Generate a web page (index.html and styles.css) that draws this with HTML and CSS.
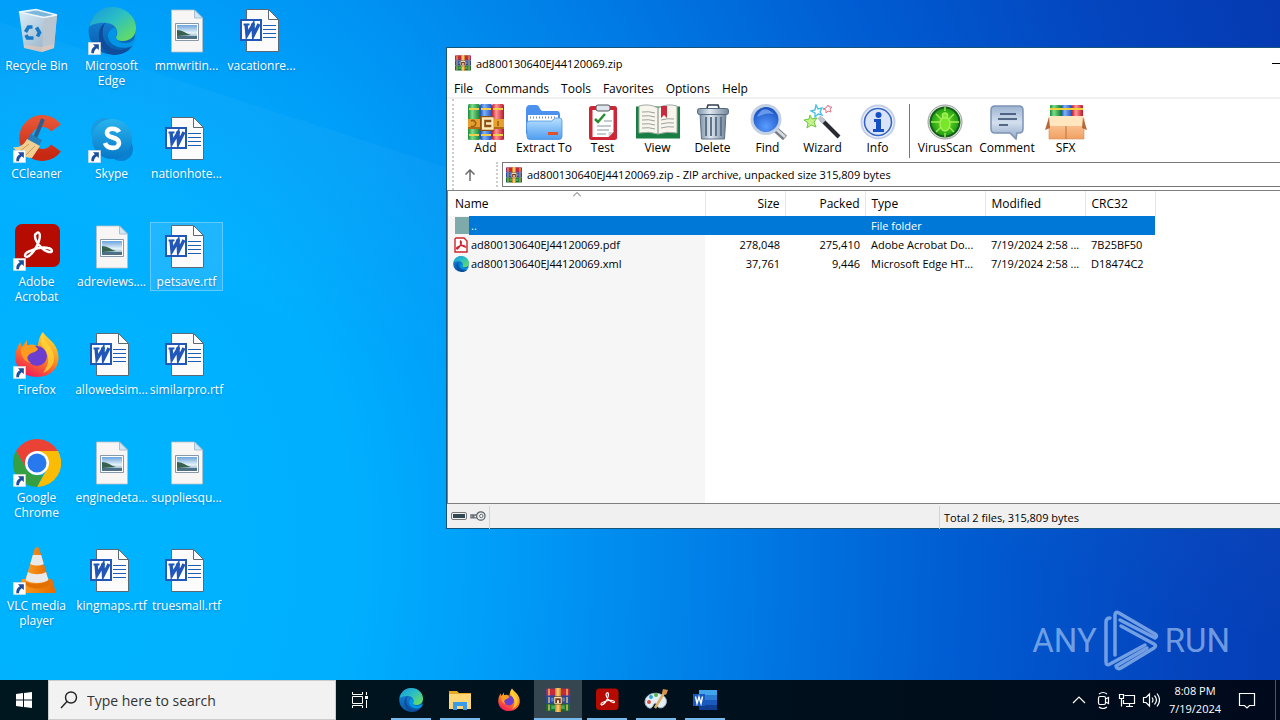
FILE: index.html
```html
<!DOCTYPE html>
<html lang="en">
<head>
<meta charset="utf-8">
<title>Desktop</title>
<link rel="stylesheet" href="styles.css">
</head>
<body>
<svg class="sprite" aria-hidden="true">
  <defs>
    <linearGradient id="edgeTop" x1="0" y1="0" x2="1" y2="1"><stop offset="0" stop-color="#1596dc"/><stop offset=".45" stop-color="#2bbfc5"/><stop offset="1" stop-color="#71e34d"/></linearGradient>
    <linearGradient id="edgeLeft" x1="0" y1="0" x2="0" y2="1"><stop offset="0" stop-color="#198be0"/><stop offset="1" stop-color="#0759a8"/></linearGradient>
    <linearGradient id="bin" x1="0" y1="0" x2="1" y2="1"><stop offset="0" stop-color="#f3f7fb"/><stop offset="1" stop-color="#9aa7b5"/></linearGradient>
    <linearGradient id="sky" x1="0" y1="0" x2="0" y2="1"><stop offset="0" stop-color="#6aa4dc"/><stop offset=".55" stop-color="#e5f1f8"/><stop offset="1" stop-color="#6e9bb5"/></linearGradient>
    <linearGradient id="skype" x1="0" y1="0" x2="0" y2="1"><stop offset="0" stop-color="#28b4ee"/><stop offset="1" stop-color="#0678c8"/></linearGradient>
    <linearGradient id="cc" x1="0" y1="0" x2="0" y2="1"><stop offset="0" stop-color="#e65434"/><stop offset="1" stop-color="#c62812"/></linearGradient>
    <linearGradient id="fox" x1=".8" y1="0" x2=".3" y2="1"><stop offset="0" stop-color="#ffe33a"/><stop offset=".5" stop-color="#ff8a1e"/><stop offset="1" stop-color="#f0185c"/></linearGradient>
    <linearGradient id="cone" x1="0" y1="0" x2="1" y2="0"><stop offset="0" stop-color="#ff9d22"/><stop offset="1" stop-color="#e56a00"/></linearGradient>
    <linearGradient id="blueFolder" x1="0" y1="0" x2="0" y2="1"><stop offset="0" stop-color="#b9e1ff"/><stop offset="1" stop-color="#4f9df0"/></linearGradient>
    <linearGradient id="steel" x1="0" y1="0" x2="1" y2="0"><stop offset="0" stop-color="#7f92a6"/><stop offset=".4" stop-color="#dfe8f0"/><stop offset="1" stop-color="#72869a"/></linearGradient>
    <linearGradient id="bubble" x1="0" y1="0" x2="0" y2="1"><stop offset="0" stop-color="#9db3d1"/><stop offset=".5" stop-color="#d3dfee"/><stop offset="1" stop-color="#92a8c9"/></linearGradient>
    <linearGradient id="box" x1="0" y1="0" x2="0" y2="1"><stop offset="0" stop-color="#ffd0a2"/><stop offset="1" stop-color="#f0a064"/></linearGradient>
    <linearGradient id="bookG" x1="0" y1="0" x2="1" y2="0"><stop offset="0" stop-color="#178a3a"/><stop offset=".35" stop-color="#7fdc8a"/><stop offset="1" stop-color="#13802f"/></linearGradient>
    <linearGradient id="bookB" x1="0" y1="0" x2="1" y2="0"><stop offset="0" stop-color="#1648b4"/><stop offset=".35" stop-color="#7fb2f6"/><stop offset="1" stop-color="#1a4fc0"/></linearGradient>
    <linearGradient id="bookR" x1="0" y1="0" x2="1" y2="0"><stop offset="0" stop-color="#c41a2c"/><stop offset=".35" stop-color="#ff9a98"/><stop offset="1" stop-color="#bd1427"/></linearGradient>
    <radialGradient id="lens" cx=".5" cy=".75" r=".7"><stop offset="0" stop-color="#5a9cff"/><stop offset="1" stop-color="#164fc0"/></radialGradient>
    <radialGradient id="virus"><stop offset="0" stop-color="#7ee81e"/><stop offset="1" stop-color="#199a14"/></radialGradient>
  </defs>
  <symbol id="i-link" viewBox="0 0 12 12"><path fill="#fff" stroke="#c8d0d8" stroke-width=".5" d="M.3.3h11.4v11.4H.3z"/><path fill="#1c4e9e" d="M4.600 2H10v5.400L8.200 5.700C6.300 7 5.600 8.300 5.500 10.400H3.100C2.700 7.500 4 5.200 6.300 3.900z"/></symbol>
  <symbol id="i-bin" viewBox="0 0 48 48"><path fill="url(#bin)" d="M6 5l5 36 17 4 13-4 3-33-21-5z" opacity=".9"/><path fill="#b9c6d2" d="M31 10l13-2-3 33-12 4z"/><path fill="#68afd8" opacity=".8" d="M8 6l16-2.500L42 8l-11 2z"/><path fill="none" stroke="#eef6fc" stroke-width="1.500" d="M6 5l17-2.500L44 8l-13 2.500z"/><path fill="#ecc9b4" opacity=".6" d="M11 38l18 2 12-3v4l-12 4-17-4z"/><g fill="none" stroke="#1579c8" stroke-width="3.600"><path d="M12.500 25l3-5h4"/><path d="M23.500 20.500l3 5-2 4"/><path d="M20.500 31h-6l-1.500-3"/></g></symbol>
  <symbol id="i-edge" viewBox="0 0 48 48"><circle cx="24" cy="24" r="23.500" fill="url(#edgeLeft)"/><path fill="url(#edgeTop)" d="M1 20C4 7 13 0 24 0c14 0 24 10 24 21 0 8-6 13-13 13-5 0-8-2-7-4 3-4 1-13-9-14C10 15 3 18 1 20z"/><path fill="#0f4d9c" d="M18 15c-5 5-6 25 11 28 8 1 14-4 16-5-5 8-13 10-20 10C11 45 5 23 18 15z"/><path fill="#0099eb" d="M28 29c0 4 4 7 9 7 4 0 8-2 11-5-1 4-2 6-4 8-12 5-25-1-24-12 1-3 4-6 7-6 2 2 2 6 1 8z" opacity=".9"/></symbol>
  <symbol id="i-pic" viewBox="0 0 48 48"><path fill="#f7f6f4" stroke="#b8c0c6" stroke-width=".8" d="M8.500 3h23l8 8v34h-31z"/><path fill="#cfe6f6" stroke="#9db4c4" stroke-width=".8" d="M31.500 3v8h8z"/><path fill="#fff" stroke="#8798a8" d="M12.500 16.500h23v17h-23z"/><path fill="url(#sky)" d="M14 18h20v14H14z"/><path fill="#36624f" d="M14 23c5 0 8 3 14 5l-14 1z"/><path fill="#4c7187" d="M14 29h20v3H14z"/></symbol>
  <symbol id="i-doc" viewBox="0 0 48 48"><path fill="#fbfbfb" stroke="#5c6974" d="M8.500 2.500h22l10 10v32h-32z"/><path fill="#fff" stroke="#5c6974" d="M30.500 2.500v10h10z"/><path stroke="#215cb4" d="M25 19.500h13M25 23.500h13M25 27.500h13M25 31.500h13" transform="translate(0 -1)"/><path fill="#fff" stroke="#2158b8" stroke-width="2" d="M3 13h20v20H3z"/><path fill="none" stroke="#2158b8" stroke-width="3.400" d="M8 17l1 11 6-10 .5 10L21 17"/><path stroke="#2158b8" stroke-width="1.800" d="M5.500 17.500h6M13 17.500h4"/></symbol>
  <symbol id="i-cc" viewBox="0 0 48 48"><path fill="none" stroke="url(#cc)" stroke-width="12" d="M43 13A17 17 0 1 0 43 33"/><path stroke="#315d8c" stroke-width="4" d="M30 4L22 23"/><path fill="#247fbd" d="M17 19l12 6-4 8-11-6z"/><path fill="#f1cf91" d="M14 24l13 7-8 12C12 43 5 39 0 32c6 1 11-2 14-8z"/><path fill="none" stroke="#c89c5f" d="M16 29l-9 7M22 31l-9 9"/></symbol>
  <symbol id="i-skype" viewBox="0 0 48 48"><circle cx="16" cy="16" r="13" fill="#189be0"/><circle cx="33" cy="34" r="12" fill="#0b7fd0"/><circle cx="24" cy="24" r="20" fill="url(#skype)"/><path fill="none" stroke="#fff" stroke-width="4.600" d="M31 17c-2-4-12-5-12 1 0 6 12 3 12 10 0 7-12 6-14 0"/></symbol>
  <symbol id="i-acro" viewBox="0 0 48 48"><rect x="2" y="1" width="45" height="43" rx="7" fill="#b50b00"/><path fill="none" stroke="#fff" stroke-width="2.400" stroke-linejoin="round" d="M23 11c3-4 5 0 3 7-2 6-7 14-12 16-3 0-3-4 3-6 7-3 14-4 18-3 5 1 5 5 1 4C30 28 22 19 22 13c0-1 0-2 1-2z"/></symbol>
  <symbol id="i-fox" viewBox="0 0 48 48"><path fill="url(#fox)" d="M30 1c2 4 8 8 11 12 10 14 3 33-17 33C6 46-1 31 4 17l3-6 2 5 5-7v6c5-3 8-1 11 1 0-6 2-12 5-15z"/><circle cx="24" cy="25" r="10" fill="#6c3ed0"/><path fill="#ff9b1f" d="M8 17c6-5 14-3 17 1-2 4-8 3-10 7-2 2 0 5 3 7-6-1-11-7-10-15z"/><path fill="#ffd83a" opacity=".75" d="M30 3c1 9 11 13 11 24 0 8-6 13-11 15 7-10 7-17 0-26-3-4-3-9 0-13z"/></symbol>
  <symbol id="i-chrome" viewBox="0 0 48 48"><path fill="#ea4335" d="M24 0a24 24 0 0 1 21 12H24L13.500 30 3 12A24 24 0 0 1 24 0z"/><path fill="#fbbc05" d="M45 12A24 24 0 0 1 24 48l10-18c3-6 0-14-10-18z"/><path fill="#34a043" d="M3 12l11 19c4 5 10 6 16 5l-6 12A24 24 0 0 1 3 12z"/><circle cx="24" cy="24" r="12" fill="#fff"/><circle cx="24" cy="24" r="9.500" fill="#2879ee"/></symbol>
  <symbol id="i-vlc" viewBox="0 0 48 48"><path fill="url(#cone)" d="M9 32h30l4 14H5z"/><path fill="#e17000" d="M12 37l2-9h20l3 9c-5 6-20 6-25 0z"/><path fill="url(#cone)" d="M22 1q2-1.500 4 0l10 33c-5 4-19 4-24 0z"/><path fill="#e9e9e9" d="M19.800 8h8.400l2.600 9c-4 2-9.600 2-13.600 0zM15 25c5 3 13 3 18 0l2.500 8c-5 4-18 4-23 0z"/></symbol>
  <symbol id="i-rar" viewBox="0 0 32 32"><rect y="1" width="32" height="10" rx="1" fill="#6a3596"/><path fill="#c9283a" d="M1 1h11v8H1zM20 1h11v8H20z"/><rect y="11" width="32" height="10" rx="1" fill="#2748a8"/><path fill="#5a86d8" d="M7 13h5v5H7zM20 13h5v5h-5z"/><rect y="21" width="32" height="10" rx="1" fill="#176f33"/><path fill="#45a85b" d="M7 23h5v5H7zM20 23h5v5h-5z"/><path stroke="#e8bd58" stroke-width="2" d="M4 1v9M28 1v9M4 12v8M28 12v8M4 22v8M28 22v8"/><path fill="#cf8b2c" d="M12 0h8v32h-8z"/><path fill="#f1c469" d="M14 0h4v32h-4z"/><path fill="#fff3d0" stroke="#5a3312" d="M10.500 11.500h11v10h-11z"/><path stroke="#7a3413" stroke-width="2.400" d="M13.500 20v-5h5v5" fill="none"/></symbol>
  <symbol id="i-add" viewBox="0 0 36 36"><rect x="0" y="0" width="12" height="36" rx="1.500" fill="url(#bookG)"/><rect x="12" y="0" width="12" height="36" rx="1.500" fill="url(#bookB)"/><rect x="24" y="0" width="12" height="36" rx="1.500" fill="url(#bookR)"/><path fill="#f0cf4a" d="M1 4h10v2H1zM13 4h10v2H13zM25 4h10v2H25zM1 30h10v2H1zM13 30h10v2H13zM25 30h10v2H25z"/><path fill="#e8a02c" d="M0 15h36v9H0z"/><path fill="#b26a16" d="M0 23h36v2H0z"/><path fill="#8d5014" d="M12 12h14v15H12z"/><path fill="none" stroke="#ffe9b8" stroke-width="2.400" d="M24.500 14.500H15v10h9.500zM18 19.500h7"/><path fill="none" stroke="#94611b" stroke-width="1.500" d="M3 17a3 3 0 1 1 0 5M30 17v5"/></symbol>
  <symbol id="i-extract" viewBox="0 0 36 36"><path fill="#4d91ee" d="M0 30V6q0-5 4-5h6q3 0 4 4l2 2h15q3 0 3 4v19z"/><path fill="#fff" d="M2 11h30v12H2z"/><path stroke="#7a8fa8" stroke-width="2" stroke-dasharray="1 2" d="M4 13.500h26"/><path fill="url(#blueFolder)" stroke="#4a92e0" stroke-width=".8" d="M.5 20q0-3 3-3h22l4-3h4q2.500 0 2.500 3v15q0 3.500-3 3.500H4q-3 0-3-3z"/><path fill="#e0502d" d="M22 28h10v3H22z"/></symbol>
  <symbol id="i-test" viewBox="0 0 36 36"><rect x="4" y="2" width="28" height="34" rx="2.500" fill="#cf2637"/><path fill="#fff" d="M7.500 6h21v22l-5 5h-16z"/><path fill="#cdd5db" d="M28.500 28h-5v5z"/><rect x="11" y="1" width="14" height="6" rx="2" fill="#dce5eb" stroke="#555"/><path fill="none" stroke="#298c31" stroke-width="2.500" d="M10 15l3 3 7-8"/><path stroke="#8797a4" d="M19 17h8M12 22h14M12 26h12M12 30h9"/></symbol>
  <symbol id="i-view" viewBox="0 0 44 36"><path fill="#187e43" d="M0 2.500h44v32H0z"/><path fill="#f8f6ec" stroke="#a2aaa5" d="M3 2q10-3 19 2v26q-9-3-19-1zM41 2Q31-1 22 4v26q9-3 19-1z"/><path fill="none" stroke="#9aa1a0" d="M6 8q7-1 13 1M6 12q7-1 13 1M6 16q7-1 13 1M6 20q7-1 13 1M6 24q7-1 13 1M25 16q7-2 13-1M25 20q7-2 13-1M25 24q7-2 13-1"/><path fill="#c92b3c" d="M25 2h6v12l-3-3-3 3z"/></symbol>
  <symbol id="i-delete" viewBox="0 0 36 36"><path fill="url(#steel)" stroke="#5d7286" d="M5 10h26l-1.500 25h-23z"/><path stroke="#5d748a" stroke-width="2" d="M11 13v19M16 13v19M21 13v19M26 13v19"/><rect x="2.500" y="4.500" width="31" height="6" rx="2" fill="url(#steel)" stroke="#53697d"/><path fill="none" stroke="#333f4c" stroke-width="1.600" d="M12 4l1-3h10l1 3"/></symbol>
  <symbol id="i-find" viewBox="0 0 38 36"><path stroke="#777f88" stroke-width="6" d="M26 25l10 9"/><path stroke="#d9dee3" stroke-width="2.500" d="M26 24l10 9"/><circle cx="17" cy="15.500" r="14" fill="url(#lens)" stroke="#c3cfe2" stroke-width="3"/><path fill="#9cc4ff" opacity=".55" d="M8 13Q14-1 25 10q-7-2-17 3z"/></symbol>
  <symbol id="i-wizard" viewBox="0 0 38 36"><path stroke="#292b34" stroke-width="4" d="M17 15l18 18"/><path stroke="#bdc5cd" stroke-width="4.500" d="M15 13l5 5"/><path fill="#fff" stroke="#43bfea" stroke-width="1.300" d="M12 1l2 4 4-1-2 4 2 3-4-1-3 3v-4l-4-2 4-1z"/><path fill="#c5f090" stroke="#6cc837" d="M6 11l2 4 5-1-3 4 2 5-5-2-4 3 1-5-4-3 5-1z"/><path fill="#fff" stroke="#e87486" d="M24 1l1 2 3 0-2 2 1 3-3-1-2 2v-3l-3-1 3-1z"/></symbol>
  <symbol id="i-info" viewBox="0 0 36 36"><circle cx="18" cy="18" r="16.500" fill="#edf1fb" stroke="#c3cfea" stroke-width="2"/><circle cx="18" cy="18" r="13.500" fill="#dae4f8" stroke="#3666c4" stroke-width="1.600"/><circle cx="18.500" cy="11" r="3" fill="#1551c2"/><path fill="#1551c2" d="M14 15h7v10h3v3H13v-3h3v-7h-2z"/></symbol>
  <symbol id="i-virus" viewBox="0 0 36 36"><circle cx="18" cy="18" r="17" fill="#e7ece7" stroke="#999"/><circle cx="18" cy="18" r="14.500" fill="url(#virus)" stroke="#185d20" stroke-width="2"/><g stroke="#a4ee5c" stroke-width="1.400" fill="#7ae62a"><ellipse cx="18" cy="20" rx="5" ry="7"/><circle cx="18" cy="11.500" r="2.500"/><path fill="none" d="M18 3v4M18 29v4M4 18h9M23 18h9M9 10l5 5M27 10l-5 5M9 28l5-5M27 28l-5-5"/></g></symbol>
  <symbol id="i-comment" viewBox="0 0 36 36"><path fill="url(#bubble)" stroke="#7d93b6" stroke-width="1.500" d="M6 2h24q4 0 4 4v19q0 4-4 4h-2l-1 6-6-6H6q-4 0-4-4V6q0-4 4-4z"/><path stroke="#2e4467" stroke-width="1.500" d="M11 10h16M9 15h19M10 21h9"/></symbol>
  <symbol id="i-sfx" viewBox="0 0 42 36"><rect x="5" y="1" width="11" height="14" rx="1" fill="url(#bookG)"/><rect x="16" y="1" width="11" height="14" rx="1" fill="url(#bookB)"/><rect x="27" y="1" width="11" height="14" rx="1" fill="url(#bookR)"/><path fill="#f2d13b" d="M5 4h33v2H5z"/><path fill="url(#box)" stroke="#d78e54" stroke-width=".6" d="M4 14h35v21H4z"/><path fill="#ffe6bf" d="M5 12h33l2 10H3z"/><path fill="#b7683a" d="M4 13l1 11-5 2zM38 13l4 13-5-2z"/><path stroke="#be723f" d="M21 22v13"/></symbol>
  <symbol id="i-explorer" viewBox="0 0 24 24"><path fill="#e5a924" d="M1 3h8l2 2h12v6H1z"/><path fill="#ffd777" d="M1 6h22v15H1z"/><path fill="#3c9be8" d="M5 14h14v8h-4v-4H9v4H5z"/></symbol>
  <symbol id="i-paint" viewBox="0 0 24 24"><path fill="#e3edf5" stroke="#9eb4c5" d="M2 10C6 3 19 4 22 11c2 6-4 11-8 8-2-1-1-4-3-4-2 1-2 6-6 5-4-2-5-6-3-10z"/><circle cx="7" cy="9" r="2" fill="#32a5d8"/><circle cx="12" cy="7" r="2" fill="#55b647"/><circle cx="5" cy="14" r="2" fill="#d64e3d"/><path stroke="#ddae65" stroke-width="2.500" d="M11 20L20 5"/><path fill="#d99149" d="M18 5l1-4 5 1-2 5z"/></symbol>
  <symbol id="i-word" viewBox="0 0 24 24"><path fill="#41a5ee" d="M6 2h18v5H6z"/><path fill="#2b7cd3" d="M6 7h18v5H6z"/><path fill="#185abd" d="M6 12h18v5H6z"/><path fill="#103f91" d="M6 17h18v5H6z"/><path fill="#185abd" d="M0 6h12v12H0z"/><path fill="none" stroke="#fff" stroke-width="1.400" d="M2.500 8.500l1.500 7 2-6.500 2 6.500 1.500-7"/></symbol>
  <symbol id="i-pdf" viewBox="0 0 16 16"><path fill="#fff" stroke="#d1232b" stroke-width="1.400" d="M3 1h8l3 3v11H2V2z"/><path fill="none" stroke="#d1232b" stroke-width="1.300" d="M7.500 4c2 1 0 5-3 8-2 0-1-2 2-3 3-1 5-1 6 1-3 0-6-3-5-6z"/></symbol>
</svg>

<main class="desktop">
  <section class="shortcuts" aria-label="Desktop icons">
    <button class="shortcut"><svg><use href="#i-bin"/></svg><span>Recycle Bin</span></button>
    <button class="shortcut"><svg><use href="#i-cc"/></svg><svg class="link"><use href="#i-link"/></svg><span>CCleaner</span></button>
    <button class="shortcut"><svg><use href="#i-acro"/></svg><svg class="link"><use href="#i-link"/></svg><span>Adobe Acrobat</span></button>
    <button class="shortcut"><svg><use href="#i-fox"/></svg><svg class="link"><use href="#i-link"/></svg><span>Firefox</span></button>
    <button class="shortcut"><svg><use href="#i-chrome"/></svg><svg class="link"><use href="#i-link"/></svg><span>Google Chrome</span></button>
    <button class="shortcut"><svg><use href="#i-vlc"/></svg><svg class="link"><use href="#i-link"/></svg><span>VLC media player</span></button>
    <button class="shortcut"><svg><use href="#i-edge"/></svg><svg class="link"><use href="#i-link"/></svg><span>Microsoft Edge</span></button>
    <button class="shortcut"><svg><use href="#i-skype"/></svg><svg class="link"><use href="#i-link"/></svg><span>Skype</span></button>
    <button class="shortcut"><svg><use href="#i-pic"/></svg><span>adreviews....</span></button>
    <button class="shortcut"><svg><use href="#i-doc"/></svg><span>allowedsim...</span></button>
    <button class="shortcut"><svg><use href="#i-pic"/></svg><span>enginedeta...</span></button>
    <button class="shortcut"><svg><use href="#i-doc"/></svg><span>kingmaps.rtf</span></button>
    <button class="shortcut"><svg><use href="#i-pic"/></svg><span>mmwritin...</span></button>
    <button class="shortcut"><svg><use href="#i-doc"/></svg><span>nationhote...</span></button>
    <button class="shortcut focused"><svg><use href="#i-doc"/></svg><span>petsave.rtf</span></button>
    <button class="shortcut"><svg><use href="#i-doc"/></svg><span>similarpro.rtf</span></button>
    <button class="shortcut"><svg><use href="#i-pic"/></svg><span>suppliesqu...</span></button>
    <button class="shortcut"><svg><use href="#i-doc"/></svg><span>truesmall.rtf</span></button>
    <button class="shortcut"><svg><use href="#i-doc"/></svg><span>vacationre...</span></button>
  </section>

  <div class="watermark">
    <span>ANY</span>
    <svg viewBox="0 0 56 62" aria-hidden="true"><g fill="none" stroke="currentColor" stroke-width="3.500" stroke-linejoin="round" stroke-linecap="round"><path d="M7 8Q3 8 3 12v40q0 4 4 2l35-19"/><path d="M12 45V5q0-4 4-2l36 21q3 2 0 4L17 10"/><path d="M18 16l33 18q3 2 0 4L18 58q-4 2-5-2l31-18"/></g></svg>
    <span>RUN</span>
  </div>

  <section class="window" aria-label="ad800130640EJ44120069.zip">
    <header class="titlebar"><svg><use href="#i-rar"/></svg><span>ad800130640EJ44120069.zip</span><button class="minimize" aria-label="Minimize"></button></header>
    <nav class="menu"><button>File</button><button>Commands</button><button>Tools</button><button>Favorites</button><button>Options</button><button>Help</button></nav>
    <div class="bars">
      <div class="toolbar">
        <button><svg><use href="#i-add"/></svg>Add</button>
        <button class="wide"><svg><use href="#i-extract"/></svg>Extract To</button>
        <button><svg><use href="#i-test"/></svg>Test</button>
        <button><svg><use href="#i-view"/></svg>View</button>
        <button><svg><use href="#i-delete"/></svg>Delete</button>
        <button><svg><use href="#i-find"/></svg>Find</button>
        <button><svg><use href="#i-wizard"/></svg>Wizard</button>
        <button><svg><use href="#i-info"/></svg>Info</button>
        <i class="divider"></i>
        <button class="wide"><svg><use href="#i-virus"/></svg>VirusScan</button>
        <button class="wide"><svg><use href="#i-comment"/></svg>Comment</button>
        <button><svg><use href="#i-sfx"/></svg>SFX</button>
      </div>
      <div class="pathbar">
        <button class="up" aria-label="Up one level"><svg viewBox="0 0 12 12"><path fill="none" stroke="#6b6b6b" stroke-width="1.500" d="M6 12V1M1.500 5.500L6 1l4.500 4.500"/></svg></button>
        <div class="address"><svg><use href="#i-rar"/></svg><input aria-label="Archive path" value="ad800130640EJ44120069.zip - ZIP archive, unpacked size 315,809 bytes" readonly></div>
      </div>
    </div>
    <div class="list">
      <table>
        <colgroup><col class="c-name"><col class="c-size"><col class="c-size"><col class="c-type"><col class="c-mod"><col class="c-crc"></colgroup>
        <thead><tr><th>Name<svg class="sort" viewBox="0 0 8 5"><path fill="none" stroke="#666" d="M0 4.500l4-4 4 4"/></svg></th><th class="num">Size</th><th class="num">Packed</th><th>Type</th><th>Modified</th><th>CRC32</th></tr></thead>
        <tbody>
          <tr class="selected"><td><div class="file"><i class="folder"></i><span>..</span></div></td><td></td><td></td><td>File folder</td><td></td><td></td></tr>
          <tr><td><div class="file"><svg><use href="#i-pdf"/></svg><span>ad800130640EJ44120069.pdf</span></div></td><td class="num">278,048</td><td class="num">275,410</td><td>Adobe Acrobat Do...</td><td>7/19/2024 2:58 ...</td><td>7B25BF50</td></tr>
          <tr><td><div class="file"><svg><use href="#i-edge"/></svg><span>ad800130640EJ44120069.xml</span></div></td><td class="num">37,761</td><td class="num">9,446</td><td>Microsoft Edge HT...</td><td>7/19/2024 2:58 ...</td><td>D18474C2</td></tr>
        </tbody>
      </table>
    </div>
    <footer class="status">
      <div class="lights"><svg viewBox="0 0 16 8"><rect x=".5" y=".5" width="15" height="7" rx="1.500" fill="#f2f2f2" stroke="#777"/><path fill="#334851" d="M2 2h12v4H2z"/></svg><svg class="key" viewBox="0 0 17 12"><path fill="none" stroke="#687178" stroke-width="1.500" d="M8 5H1v3h2v-2h1v2h4"/><circle cx="11.500" cy="6" r="4.500" fill="#eee" stroke="#596269" stroke-width="1.300"/><circle cx="12" cy="6" r="1.800" fill="#fff" stroke="#596269"/></svg></div>
      <div></div><div class="total">Total 2 files, 315,809 bytes</div>
    </footer>
  </section>
</main>

<footer class="taskbar">
  <button class="start" aria-label="Start"><svg viewBox="0 0 16 16"><path fill="#fff" d="M0 2l7-1v6.500H0zM8 1l8-1v7.500H8zM0 8.500h7V15l-7-1zM8 8.500h8V16l-8-1z"/></svg></button>
  <label class="search"><svg viewBox="0 0 18 18"><circle cx="11" cy="6.500" r="5.500"/><path d="M7 10.500L1 17"/></svg><input type="text" placeholder="Type here to search" aria-label="Search"></label>
  <button class="start" aria-label="Task view"><svg viewBox="0 0 16 16"><path fill="none" stroke="#fff" d="M.5 0v2.500h10V0M.5 16v-2.500h10V16M.5 4.500h10v7H.500zM14.500 0v3M14.500 8v8"/><path fill="#fff" d="M13 4h3v3h-3z"/></svg></button>
  <nav class="apps">
    <button aria-label="Microsoft Edge" class="open"><svg><use href="#i-edge"/></svg></button>
    <button aria-label="File Explorer" class="open"><svg><use href="#i-explorer"/></svg></button>
    <button aria-label="Firefox"><svg><use href="#i-fox"/></svg></button>
    <button aria-label="WinRAR" class="open active"><svg><use href="#i-rar"/></svg></button>
    <button aria-label="Adobe Acrobat" class="open"><svg><use href="#i-acro"/></svg></button>
    <button aria-label="Paint" class="open"><svg><use href="#i-paint"/></svg></button>
    <button aria-label="Word" class="open"><svg><use href="#i-word"/></svg></button>
  </nav>
  <div class="tray">
    <button aria-label="Hidden icons"><svg viewBox="0 0 18 18"><path d="M3 12l6-6 6 6"/></svg></button>
    <button aria-label="Meet now"><svg viewBox="0 0 18 18"><rect x="4.500" y="5.500" width="7" height="8" rx="1.500"/><path d="M11.500 8l3-1.500v6l-3-1.500M5 3q4-3 8 0M5 16q4 3 8 0"/></svg></button>
    <button aria-label="Network"><svg viewBox="0 0 18 18"><path d="M6.500 4.500h10v8h-11V9M11.500 12.500v3M8 15.500h7M1.500 3.500h4v4h-4zM3.500 7.500v8"/></svg></button>
    <button aria-label="Volume"><svg viewBox="0 0 18 18"><path d="M1.500 6.500h2.500L7.500 3v12L4 11.500H1.500zM10 6.500q2 2.500 0 5M12.500 4.500q4 4.500 0 9M15 2.500q5 6.500 0 13"/></svg></button>
    <button class="clock"><span>8:08 PM</span><span>7/19/2024</span></button>
    <button class="note" aria-label="Notifications"><svg viewBox="0 0 18 18"><path d="M1.500 2.500h15v12h-5L9 17l-2.500-2.500h-5z"/></svg></button>
    <i class="peek"></i>
  </div>
</footer>
</body>
</html>
```

FILE: styles.css
```css
* { box-sizing: border-box; }
body {
  margin: 0;
  height: 100vh;
  display: flex;
  flex-direction: column;
  overflow: hidden;
  font-family: "Open Sans", "Noto Sans", sans-serif;
  font-size: 12px;
  line-height: 15px;
  color: #000;
}
button { margin: 0; padding: 0; border: 0; background: none; font: inherit; color: inherit; }
input { border: 0; padding: 0; background: none; font: inherit; color: inherit; outline: 0; }
svg { display: block; flex: none; }
.sprite { position: absolute; width: 0; height: 0; }

.desktop {
  flex: 1;
  position: relative;
  overflow: hidden;
  background:
    linear-gradient(198deg, transparent 40%, rgba(255, 255, 255, .03) 40%, transparent 60%),
    radial-gradient(ellipse 1280px 1650px at 5% 80%, #00b4ff 0%, #00b0ff 22%, #009df8 34%, #0080e8 50%, #005cd2 70%, #0444bd 88%, #053ab2 100%);
}
.shortcuts {
  display: grid;
  grid-auto-flow: column;
  grid-template-rows: repeat(6, 108px);
  grid-auto-columns: 75px;
  justify-content: start;
  padding-top: 6px;
}
.shortcut {
  position: relative;
  justify-self: start;
  align-self: start;
  width: 73px;
  height: 69px;
  display: flex;
  flex-direction: column;
  align-items: center;
  gap: 3px;
  color: #fff;
  border: 1px solid transparent;
}
.shortcut svg { width: 48px; height: 48px; }
.shortcut .link { position: absolute; left: 12px; top: 35px; width: 13px; height: 13px; }
.shortcut span { text-shadow: 0 1px 2px rgba(0, 50, 110, .4); }
.focused { border-color: rgba(150, 220, 255, .55); background: rgba(120, 200, 255, .25); }

.watermark {
  position: absolute;
  right: 50px;
  bottom: 8px;
  display: flex;
  align-items: center;
  gap: 6px;
  color: rgba(175, 205, 245, .65);
  font: 33px/62px "Roboto", sans-serif;
}
.watermark svg { width: 56px; height: 62px; }

.window {
  position: absolute;
  left: 446px;
  right: 0;
  top: 47px;
  height: 482px;
  display: flex;
  flex-direction: column;
  background: #fff;
  border: 1px solid #16547c;
  border-right: 0;
}
.titlebar { display: flex; align-items: center; gap: 5px; height: 30px; padding-left: 8px; font-size: 11px; }
.titlebar svg, .address svg { width: 16px; height: 16px; }
.minimize { margin-left: auto; width: 8px; height: 1px; background: #000; }
.menu { display: flex; gap: 12px; height: 21px; padding: 1px 0 0 7px; border-bottom: 2px solid #f0f0f0; }
.bars { border-left: 2px dotted #ccc; margin-left: 5px; }
.toolbar { display: flex; height: 63px; padding: 5px 0 0 4px; }
.toolbar button { display: flex; flex-direction: column; align-items: center; width: 55px; white-space: nowrap; }
.toolbar .wide { width: 62px; }
.toolbar svg { width: 44px; height: 36px; }
.divider { width: 1px; height: 54px; margin: 0 4px; background: #777; }
.pathbar { display: flex; height: 28px; padding-bottom: 3px; }
.up { width: 44px; border-right: 2px dotted #ccc; padding-left: 10px; }
.up svg { width: 12px; height: 12px; }
.address { flex: 1; display: flex; align-items: center; gap: 5px; margin-left: 4px; padding-left: 3px; border: 1px solid #777; border-right: 0; }
.address input { flex: 1; font-size: 11px; height: 20px; }

.list {
  flex: 1;
  border-top: 1px solid #808080;
  border-bottom: 1px solid #808080;
  border-left: 1px solid #808080;
  background: linear-gradient(#f6f6f6, #f6f6f6) 0 25px / 257px 100% no-repeat #fff;
}
table { width: 707px; table-layout: fixed; border-collapse: collapse; font-size: 11px; }
.c-name { width: 257px; }
.c-size { width: 80px; }
.c-type { width: 120px; }
.c-mod { width: 100px; }
.c-crc { width: 70px; }
th { position: relative; height: 25px; padding: 0 6px; text-align: left; font-size: 12px; font-weight: 400; background: #fff; border-right: 1px solid #e5e5e5; }
th:first-child { padding-left: 7px; }
td { height: 19px; padding: 0 0 0 6px; white-space: nowrap; }
td:first-child { padding-left: 5px; }
.num { text-align: right; padding: 0 5px 0 0; }
.sort { position: absolute; top: 1px; left: 125px; width: 8px; height: 5px; }
.file { display: flex; align-items: center; gap: 2px; height: 19px; }
.file svg { width: 16px; height: 16px; }
.folder { width: 14px; height: 17px; margin-left: 2px; background: #7eaaa9; }
.selected { color: #fff; background: linear-gradient(90deg, #f6f6f6 21px, #0078d7 21px); }

.status { display: grid; grid-template-columns: 42px 450px 1fr; height: 24px; padding-top: 2px; background: #f0f0f0; font-size: 11px; line-height: 23px; }
.status > div + div { border-left: 1px solid #d5d5d5; }
.lights { display: flex; align-items: center; gap: 3px; padding: 0 0 3px 4px; }
.lights svg { width: 16px; height: 8px; }
.lights .key { height: 12px; }
.status .total { padding-left: 4px; }

.taskbar { display: flex; height: 40px; color: #fff; background: linear-gradient(90deg, #001720, #00101c 60%, #000a1c); }
.start { width: 48px; display: grid; place-items: center; }
.start svg { width: 16px; height: 16px; }
.search { width: 288px; display: flex; align-items: center; gap: 9px; padding-left: 11px; background: #f2f2f2; border: 1px solid #ccc; color: #333; }
.search svg { width: 18px; height: 18px; fill: none; stroke: #222; stroke-width: 1.4; }
.search input { flex: 1; min-width: 0; height: 24px; font-size: 14px; }
.search input::placeholder { color: #333; opacity: 1; }
.apps { display: flex; gap: 1px; margin-left: 3px; }
.apps button { position: relative; width: 48px; display: grid; place-items: center; }
.apps svg { width: 24px; height: 24px; }
.apps .active { background: #354650; }
.open::after { content: ""; position: absolute; bottom: 0; left: 4px; right: 4px; height: 2px; background: #76b9ed; }
.active::after { left: 0; right: 0; }
.tray { display: flex; margin-left: auto; }
.tray button { width: 24px; display: grid; place-items: center; }
.tray svg { width: 18px; height: 18px; fill: none; stroke: #fff; stroke-width: 1.2; }
.tray .clock { width: 64px; align-content: center; font-size: 11px; line-height: 18px; }
.tray .note { width: 40px; }
.peek { width: 5px; margin-left: 8px; border-left: 1px solid #4d5660; }
```
